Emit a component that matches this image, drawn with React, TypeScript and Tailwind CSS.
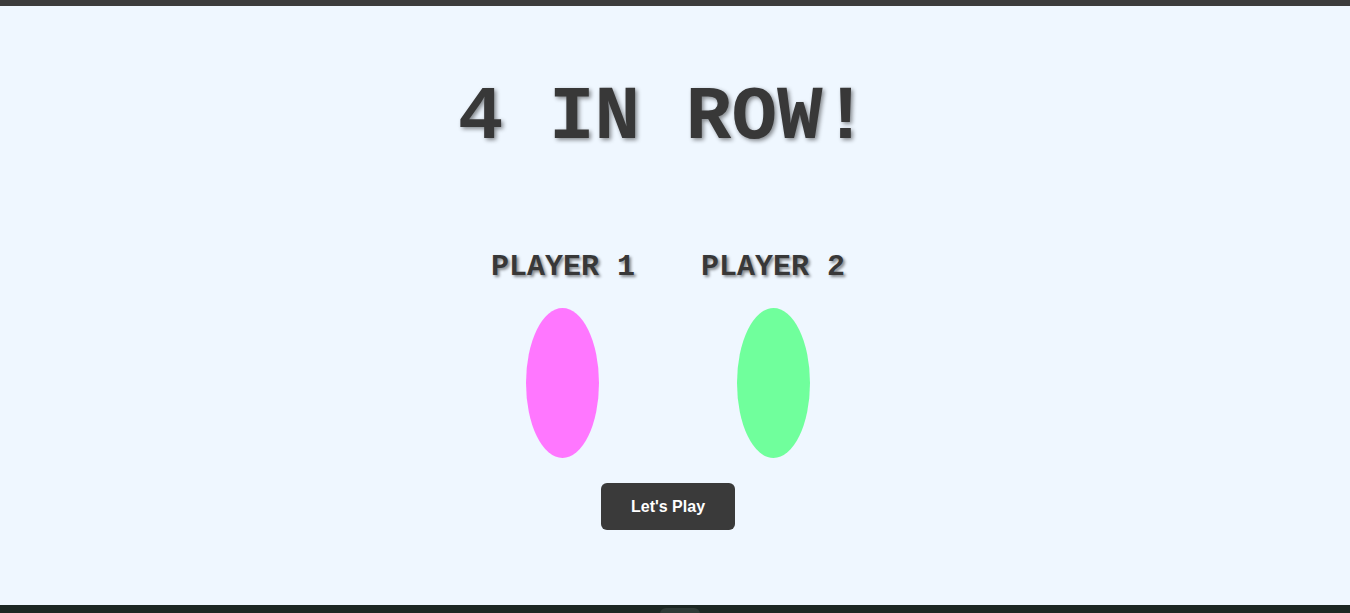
export default function App() {
  const players = [
    { name: "PLAYER 1", color: "bg-[#ff77ff]" },
    { name: "PLAYER 2", color: "bg-[#70ff9c]" },
  ];

  return (
    <div className="flex h-[613px] flex-col overflow-hidden bg-[#eff7ff]">
      <div className="h-[6px] shrink-0 bg-[#3c3c3c]" />

      <main className="flex flex-1 flex-col items-center pr-[14px]">
        <h1 className="mt-[74px] pr-[10px] font-['Courier_New','Nimbus_Mono_PS','FreeMono','Liberation_Mono',monospace] text-[76px] font-bold leading-none text-[#383838] [text-shadow:2px_2px_4px_rgba(0,0,0,0.45)]">
          4 IN ROW!
        </h1>

        <div className="mt-[96px] flex gap-[66px]">
          {players.map((p) => (
            <div key={p.name} className="flex flex-col items-center">
              <span className="whitespace-pre font-['Courier_New','Nimbus_Mono_PS','FreeMono','Liberation_Mono',monospace] text-[30px] font-bold leading-none text-[#383838] [text-shadow:2px_2px_3px_rgba(0,0,0,0.45)]">
                {p.name}
              </span>
              <div className={`mt-[26px] h-[150px] w-[73px] rounded-[50%] ${p.color}`} />
            </div>
          ))}
        </div>

        <button
          type="button"
          className="mt-[25px] h-[47px] w-[134px] rounded-[6px] bg-[#3a3a3a] font-['Liberation_Sans',Arial,sans-serif] text-[16px] font-bold text-white"
        >
          Let's Play
        </button>
      </main>

      <div className="relative h-[8px] shrink-0 bg-[#1c2723]">
        <div className="absolute left-[660px] top-[3px] h-[6px] w-[40px] rounded-t-[6px] bg-[#2e3a36]" />
      </div>
    </div>
  );
}
